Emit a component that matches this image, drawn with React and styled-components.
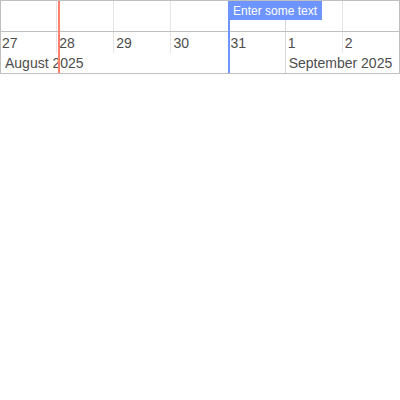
import React from "react";
import styled, { createGlobalStyle } from "styled-components";

const Global = createGlobalStyle`
  html, body { margin: 0; padding: 0; background: #fff; }
  body { font-family: "Liberation Sans", Arial, sans-serif; }
`;

const Timeline = styled.div`
  position: relative;
  box-sizing: border-box;
  width: 400px;
  border: 1px solid #bfbfbf;
  overflow: hidden;
  color: #4d4d4d;
  font-size: 14px;
`;

const Columns = styled.div`
  display: grid;
  grid-template-columns: repeat(7, 57.143px);
  margin-left: -2px;
  width: 401px;
`;

const Center = styled(Columns)`
  height: 30px;
  border-bottom: 1px solid #bfbfbf;
`;

const GridCell = styled.div`
  border-left: 1px solid ${(p) => (p.$major ? "#d6d6d6" : "#e5e5e5")};
`;

const Axis = styled(Columns)`
  grid-template-rows: 21px 20px;
`;

const DayLabel = styled.div`
  border-left: 1px solid #e5e5e5;
  padding: 3px 0 0 2px;
  line-height: 16px;
  white-space: nowrap;
`;

const MonthLabel = styled.div`
  grid-column: ${(p) => p.$span};
  border-left: 1px solid ${(p) => (p.$first ? "transparent" : "#d6d6d6")};
  padding: 2px 0 0 ${(p) => (p.$first ? "5px" : "3px")};
  line-height: 16px;
  white-space: nowrap;
  ${(p) => (p.$major ? "margin-top: -21px; padding-top: 23px;" : "")}
`;

const TimeBar = styled.div`
  position: absolute;
  top: 0;
  bottom: 0;
  width: 2px;
  left: ${(p) => p.$x}px;
  background: ${(p) => p.$color};
`;

const Marker = styled.div`
  position: absolute;
  top: 0;
  left: 0;
  background: #6e94ff;
  color: #fff;
  font-size: 12px;
  line-height: 14px;
  padding: 3px 5px 2px;
  white-space: nowrap;
`;

const days = ["27", "28", "29", "30", "31", "1", "2"];

export default function App() {
  return (
    <>
      <Global />
      <Timeline>
        <Center>
          {days.map((d, i) => (
            <GridCell key={d} $major={i === 5} />
          ))}
        </Center>
        <Axis>
          {days.map((d) => (
            <DayLabel key={d}>{d}</DayLabel>
          ))}
          <MonthLabel $span="1 / 6" $first>August 2025</MonthLabel>
          <MonthLabel $span="6 / 8" $major>September 2025</MonthLabel>
        </Axis>
        <TimeBar $x={57} $color="#ff7f6e" />
        <TimeBar $x={227} $color="#6e94ff">
          <Marker>Enter some text</Marker>
        </TimeBar>
      </Timeline>
    </>
  );
}
